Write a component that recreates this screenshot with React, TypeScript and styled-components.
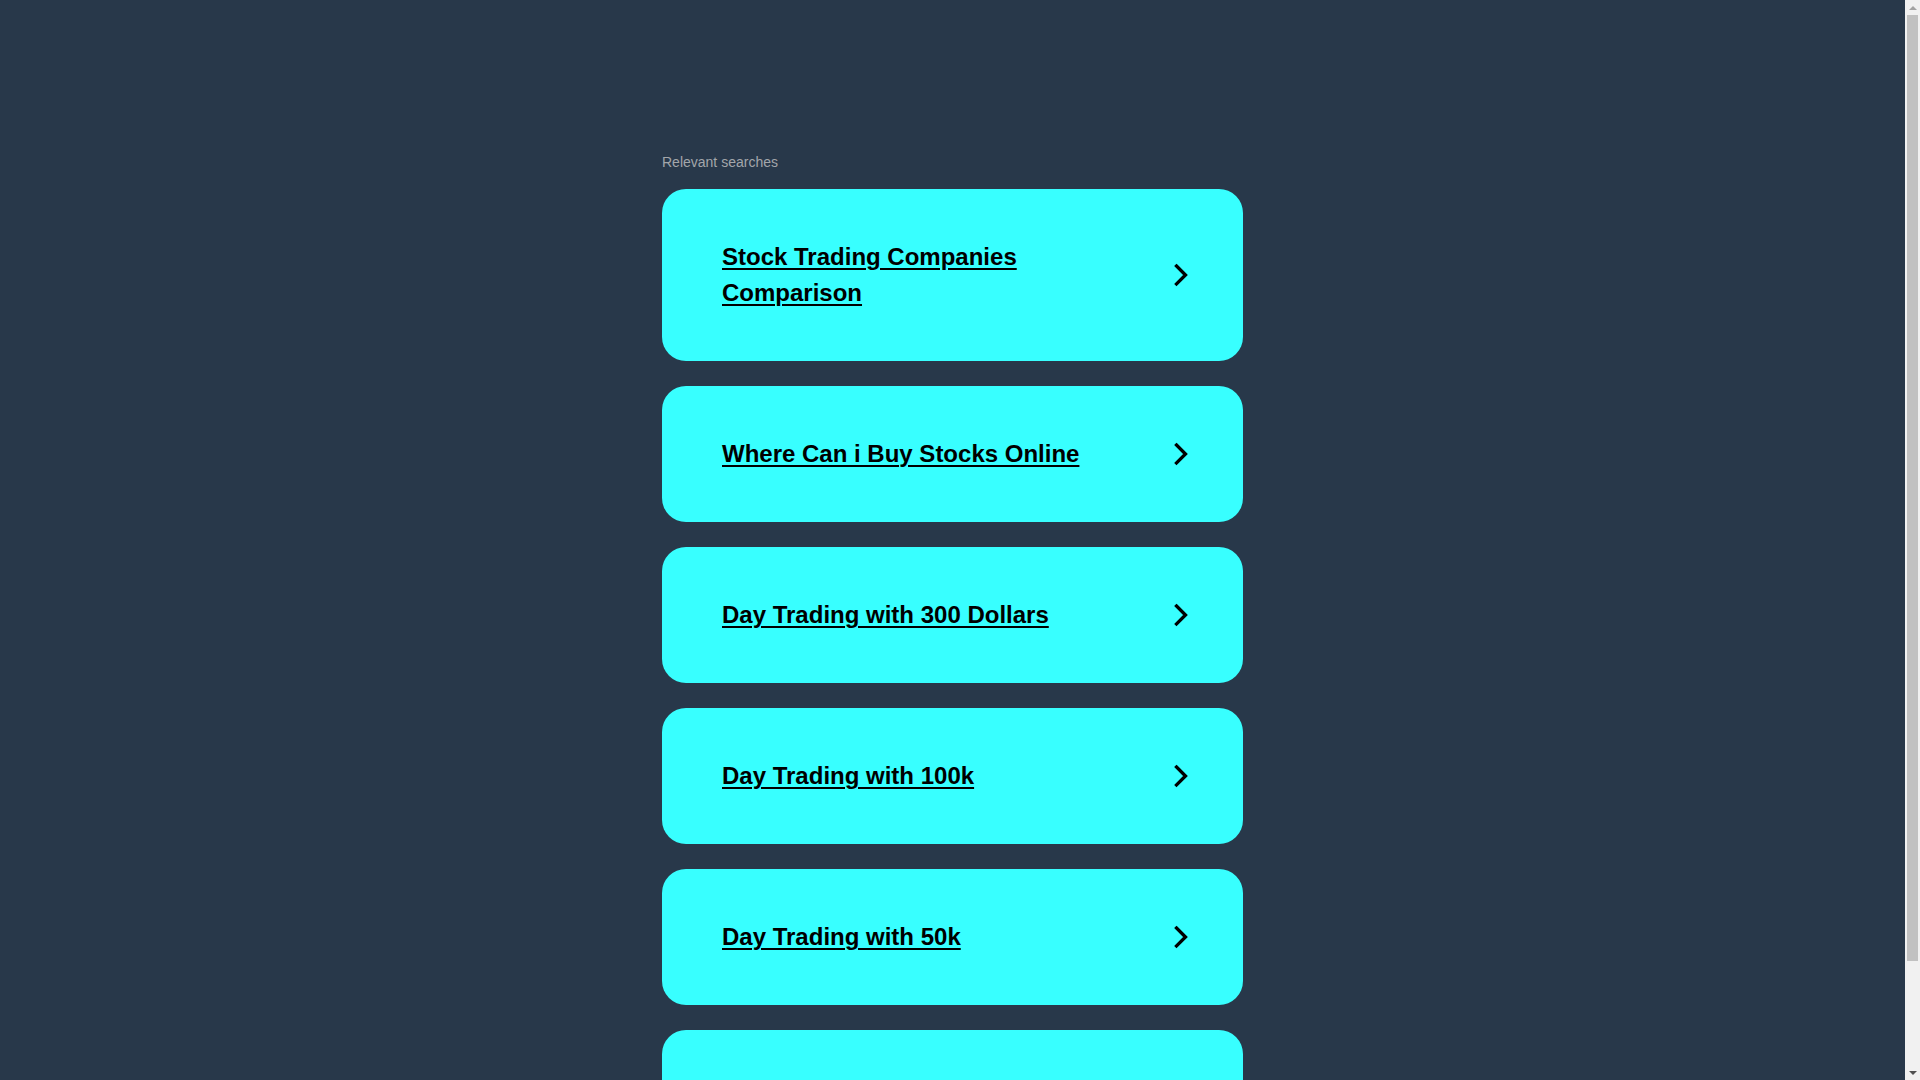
import styled, { createGlobalStyle } from "styled-components";

const GlobalStyle = createGlobalStyle`
    html, body { margin: 0; padding: 0; }
    body {
        background-color: #28384a;
        font-family: "Liberation Sans", Arial, sans-serif;
    }
`

const Page = styled.main`
    display: flex; justify-content: center;
    padding: 154px 15px 9px 0;
`
const Column = styled.section`
    display: flex; flex-direction: column;
    width: 581px;
`
const Label = styled.div`
    margin-bottom: 19px;
    font-size: 14px; line-height: 16px;
    color: #a3a6aa;
`
const Card = styled.a`
    display: flex; align-items: center; column-gap: 20px;
    margin-bottom: 25px;
    padding: 50px 44px 50px 60px;
    border-radius: 24px;
    background-color: #38ffff;
    color: #000;
    text-decoration: none;
    cursor: pointer;
`
const Title = styled.span`
    flex: 1;
    font-size: 24px; font-weight: 700; line-height: 36px;
    text-decoration: underline;
    text-decoration-thickness: 2px;
    text-underline-offset: 3px;
`
const Arrow = styled.svg`
    flex: none;
    width: 36px; height: 36px;
`

// the window's scrollbar, as the reference shows it
const ScrollTrack = styled.div`
    position: fixed; top: 0; right: 0; bottom: 0;
    display: flex; flex-direction: column; align-items: center;
    width: 15px;
    background-color: #f1f1f1;
`
const ScrollButton = styled.div<{ $down?: boolean; $active?: boolean }>`
    display: flex; align-items: center; justify-content: center;
    width: 15px; height: 15px;
    &::before {
        content: "";
        border-left: 4px solid transparent;
        border-right: 4px solid transparent;
        ${p => p.$down
            ? `border-top: 4px solid ${p.$active ? "#505050" : "#a3a3a3"};`
            : `border-bottom: 4px solid ${p.$active ? "#505050" : "#a3a3a3"};`}
    }
`
const ScrollSpace = styled.div`
    flex: 1; align-self: stretch;
    display: flex; flex-direction: column;
    padding: 0 2px;
`
const ScrollThumb = styled.div`
    height: 946px;
    background-color: #c1c1c1;
`

const searches = [
    "Stock Trading Companies Comparison",
    "Where Can i Buy Stocks Online",
    "Day Trading with 300 Dollars",
    "Day Trading with 100k",
    "Day Trading with 50k",
    "Best Online Stock Trading Sites",
]

function Chevron() {
    return (
        <Arrow viewBox="0 0 24 24" fill="none" stroke="#000" strokeWidth="2.2" strokeLinecap="square" strokeLinejoin="miter">
            <path d="M9 6l6 6-6 6" />
        </Arrow>
    )
}

export default function App() {
    return (
        <>
            <GlobalStyle />
            <Page>
                <Column>
                    <Label>Relevant searches</Label>
                    {searches.map(s => (
                        <Card key={s}>
                            <Title>{s}</Title>
                            <Chevron />
                        </Card>
                    ))}
                </Column>
            </Page>
            <ScrollTrack>
                <ScrollButton />
                <ScrollSpace>
                    <ScrollThumb />
                </ScrollSpace>
                <ScrollButton $down $active />
            </ScrollTrack>
        </>
    )
}
